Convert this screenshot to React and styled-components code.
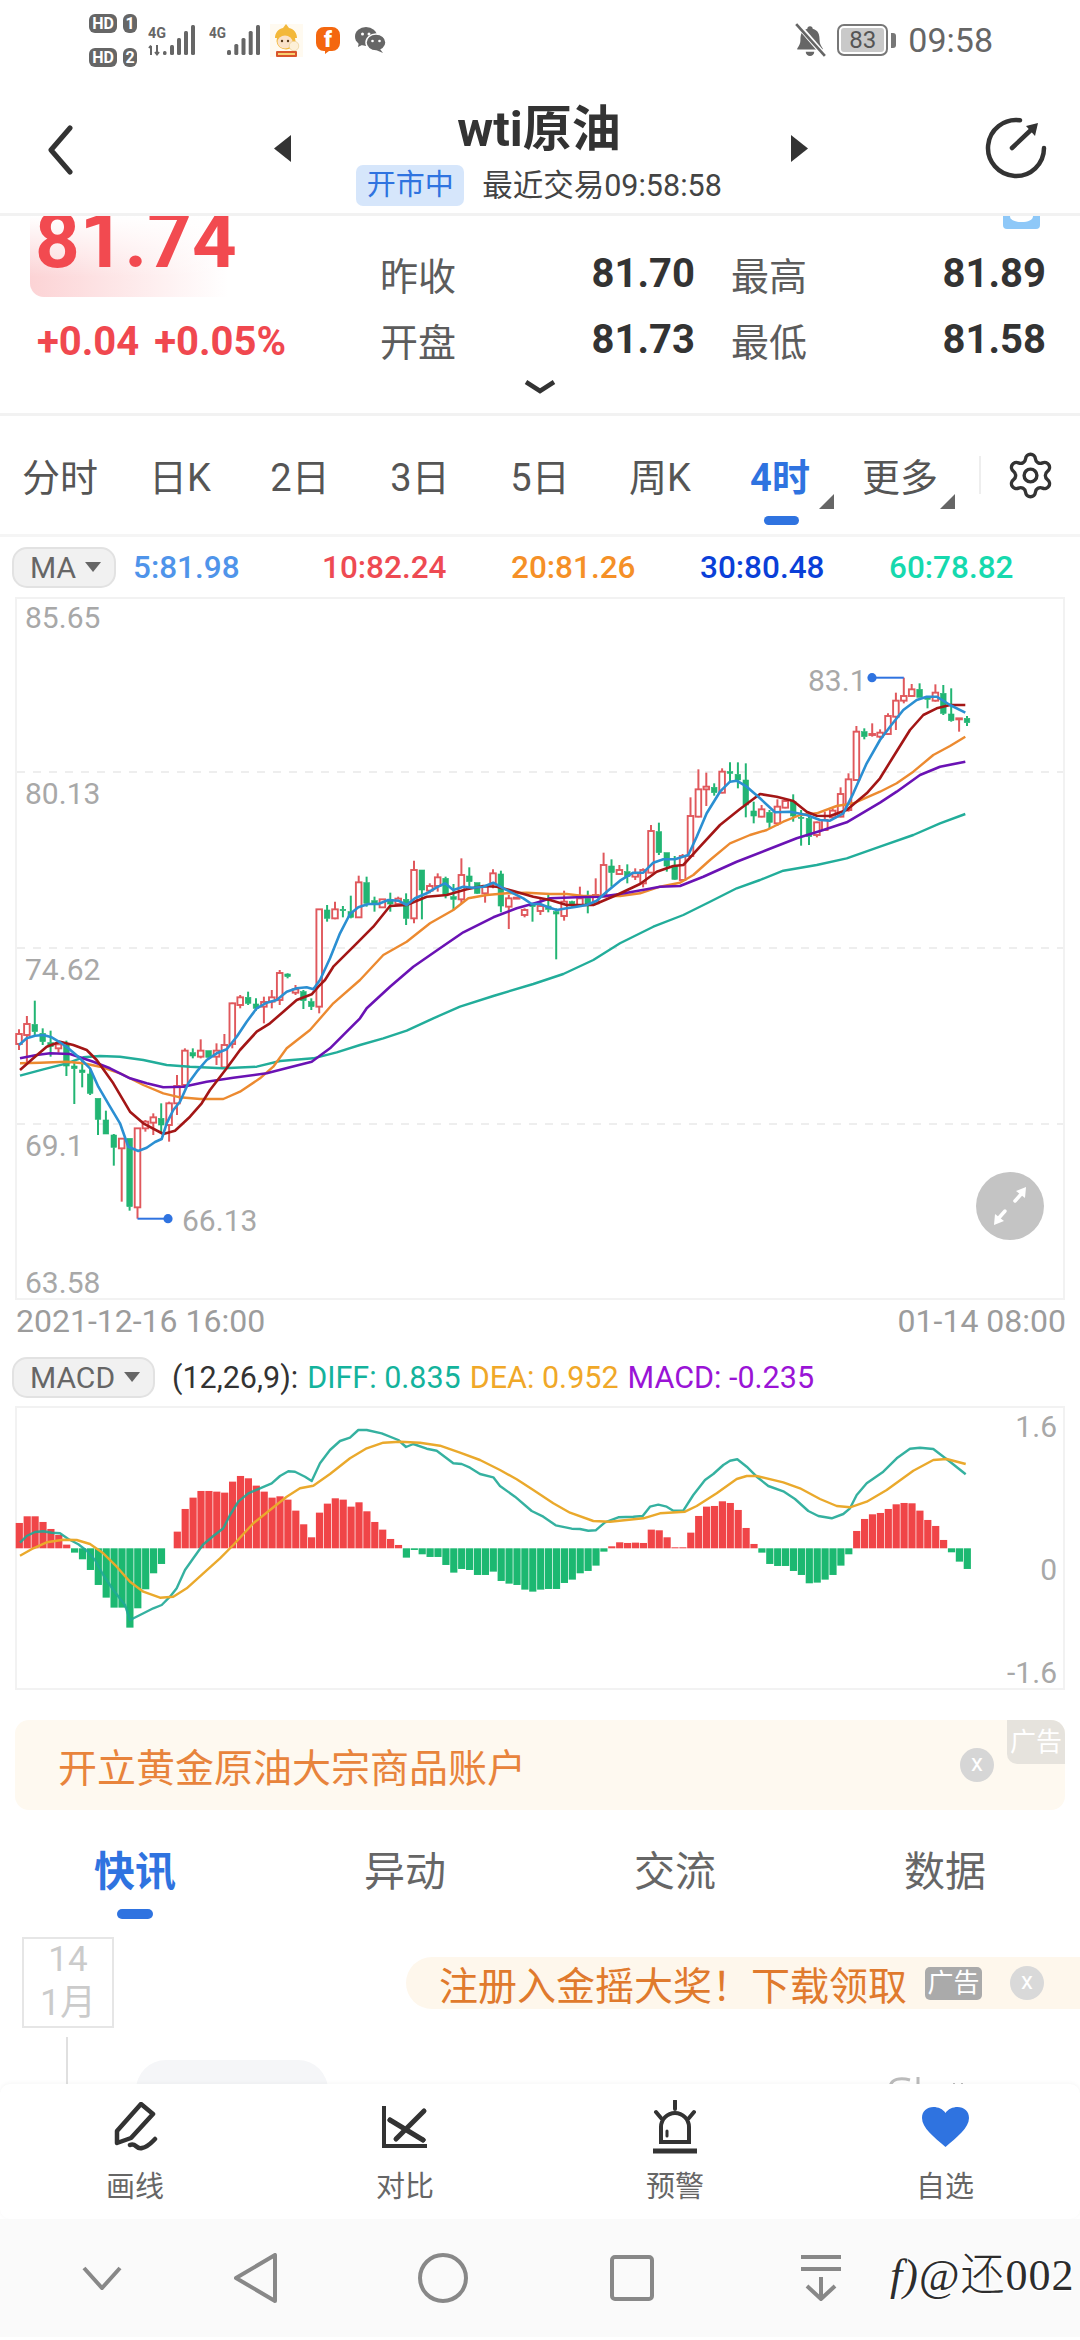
import React from 'react';
import styled, { createGlobalStyle } from 'styled-components';
import { Settings } from 'lucide-react';

const Global = createGlobalStyle`
  html, body { margin: 0; padding: 0; background: #fff; }
  #root { width: 1080px; height: 2340px; overflow: hidden; }
  * { box-sizing: border-box; }
`;

const BLUE = '#2f73e0';
const FONT = 'Roboto, "Noto Sans CJK SC", sans-serif';

const Page = styled.div`
  width: 1080px; height: 2340px; display: flex; flex-direction: column; background: #fff;
  font-family: ${FONT}; overflow: hidden; color: #333;
`;

/* ---------- status bar ---------- */
const StatusBar = styled.div`
  height: 80px; flex: none; display: flex; align-items: center; padding: 0 87px 0 89px;
`;
const SimStack = styled.div`display: flex; flex-direction: column; gap: 15px; width: 48px;`;
const SimRow = styled.div`display: flex; gap: 6px;`;
const SimChip = styled.span`
  height: 19px; width: ${p => p.$w}px; background: #666; color: #fff; border-radius: 6px;
  font: 700 16px/19px Roboto, sans-serif; text-align: center;
`;
const StatusIcon = styled.svg`display: block; flex: none; margin-left: ${p => p.$ml || 0}px;`;
const StatusRight = styled.div`margin-left: auto; display: flex; align-items: center;`;
const Battery = styled.div`
  width: 51px; height: 32px; margin-left: 10px; border: 2.5px solid #777; border-radius: 7px; padding: 2px;
  display: flex;
`;
const BatteryFill = styled.div`
  flex: 1; background: #c9c9c9; border-radius: 3px; color: #555; text-align: center;
  font: 400 24px/24px Roboto, sans-serif;
`;
const BatteryNub = styled.div`width: 5px; height: 15px; background: #777; border-radius: 0 3px 3px 0; margin-left: 3px;`;
const Clock = styled.div`font-size: 34px; color: #666; margin-left: 12px; line-height: 40px;`;

/* ---------- header ---------- */
const Header = styled.div`height: 133px; flex: none; display: flex; padding-left: 40px; align-items: flex-start; position: relative;`;
const NavSvg = styled.svg`display: block; flex: none; margin: ${p => p.$m};`;
const TitleBox = styled.div`width: 466px; flex: none; display: flex; flex-direction: column; align-items: center; margin-left: 15px;`;
const Title = styled.div`font-size: 49px; font-weight: 700; line-height: 60px; margin-top: 20px; color: #333;`;
const SubRow = styled.div`display: flex; align-items: center; margin-top: 5px;`;
const OpenBadge = styled.span`
  width: 108px; height: 41px; border-radius: 7px; background: #d6e6fb; color: ${BLUE}; font-size: 29px; line-height: 41px; text-align: center;
`;
const LastTrade = styled.span`font-size: 30.5px; color: #444; margin-left: 18px; line-height: 41px;`;
const Rule = styled.div`height: 3px; flex: none; background: #f2f2f2;`;

/* ---------- price ---------- */
const PriceArea = styled.div`height: 197px; flex: none; position: relative; overflow: hidden; display: flex;`;
const PriceCol = styled.div`width: 380px; flex: none; padding-left: 30px;`;
const PriceBox = styled.div`
  width: 215px; height: 81px; overflow: hidden; border-radius: 0 0 0 14px; padding-left: 5px;
  background: linear-gradient(to bottom, #fff, rgba(255,255,255,0) 75%), linear-gradient(to right, #fcd3d5, #fff 92%);
`;
const BigPrice = styled.div`font-size: 78px; font-weight: 700; line-height: 78px; margin-top: -14px; color: #f24a50;`;
const Change = styled.div`display: flex; gap: 15px; margin: 22px 0 0 7px; color: #f0484f; font-size: 40px; font-weight: 700; line-height: 46px; white-space: nowrap;`;
const StatGrid = styled.div`
  display: grid; grid-template-columns: 315px 315px; grid-auto-rows: 66px; column-gap: 36px; padding-top: 24.5px; height: 100%;
`;
const Stat = styled.div`display: flex; justify-content: space-between; align-items: center;`;
const StatLabel = styled.span`font-size: 38px; color: #5c5c5c;`;
const StatValue = styled.span`font-size: 40px; font-weight: 700; color: #333;`;
const MoreChevron = styled.svg`position: absolute; left: 524px; top: 164px;`;
const BlueTag = styled.svg`position: absolute; left: 1003px; top: 0;`;

/* ---------- period tabs ---------- */
const PeriodBar = styled.div`height: 121px; flex: none; display: flex; align-items: center; border-bottom: 3px solid #f5f5f5;`;
const Period = styled.div`
  width: 120px; height: 118px; flex: none; position: relative; text-align: center; line-height: 124px; font-size: 38px;
  color: ${p => p.$active ? BLUE : '#555'}; font-weight: ${p => p.$active ? 700 : 400};
`;
const CornerMark = styled.i`
  position: absolute; right: ${p => p.$r}px; top: 78px; width: 15px; height: 15px; background: #666;
  clip-path: polygon(100% 0, 100% 100%, 0 100%);
`;
const PeriodBarMark = styled.i`
  position: absolute; left: 44px; top: 100px; width: 35px; height: 9px; border-radius: 5px; background: ${BLUE};
`;
const VRule = styled.div`width: 2px; height: 38px; background: #eee; margin: 0 0 0 19px;`;
const GearWrap = styled.div`margin-left: 24px; display: flex; color: #333;`;

/* ---------- indicator rows ---------- */
const MaRow = styled.div`height: 60px; flex: none; display: flex; align-items: center; padding-left: 12px;`;
const Pill = styled.div`
  height: 41px; width: ${p => p.$w}px; flex: none; border-radius: 15px; background: #f1f1f1; border: 2px solid #e2e2e2;
  display: flex; align-items: center; padding-left: 16px; gap: 9px; font-size: 30px; color: #666; line-height: 37px;
`;
const PillArrow = styled.i`
  width: 16px; height: 10px; background: #666; clip-path: polygon(0 0, 100% 0, 50% 100%);
`;
const MaValues = styled.div`display: grid; grid-template-columns: repeat(5, 189px); margin-left: 17px;`;
const MaValue = styled.span`font-size: 31.5px; font-weight: 500; color: ${p => p.$c}; line-height: 40px; margin-top: 1px;`;
const ChartBox = styled.div`margin: 0 15px; height: ${p => p.$h}px; flex: none; border: 2px solid #f2f2f2;`;
const ChartSvg = styled.svg`display: block; overflow: visible;`;
const AxisDates = styled.div`
  height: 45px; flex: none; display: flex; justify-content: space-between; padding: 0 14px 3px 16px; align-items: center;
  font-size: 32px; color: #9c9c9c; line-height: 42px;
`;
const MacdRow = styled.div`height: 61px; flex: none; display: flex; align-items: center; padding: 3px 0 0 12px; white-space: nowrap;`;
const MacdParams = styled.div`display: flex; gap: 9px; margin: 2px 0 0 17px; font-size: 30.5px; line-height: 40px;`;
const MacdParam = styled.span`color: ${p => p.$c};`;

/* ---------- banner ---------- */
const Banner = styled.div`
  margin: 30px 15px 0; height: 90px; flex: none; background: #fef9f0; border-radius: 14px; position: relative;
  display: flex; align-items: center; padding-left: 43px;
`;
const BannerText = styled.span`font-size: 39px; color: #e8843c; white-space: nowrap;`;
const CloseDot = styled.span`
  width: 34px; height: 34px; border-radius: 50%; background: ${p => p.$c}; color: #fff; flex: none;
  margin-left: ${p => p.$ml}px; text-align: center; font: 400 24px/31px Roboto, sans-serif;
`;
const CornerTag = styled.span`
  position: absolute; top: 0; right: 0; width: 58px; height: 44px; background: #e6e3dd; color: #fff;
  border-radius: 0 14px 0 10px; font-size: 26px; line-height: 44px; text-align: center;
`;

/* ---------- news tabs ---------- */
const NewsTabs = styled.div`height: 127px; flex: none; display: grid; grid-template-columns: repeat(4, 270px);`;
const NewsTab = styled.div`
  position: relative; text-align: center; font-size: 41px; line-height: 124px;
  color: ${p => p.$active ? BLUE : '#666'}; font-weight: ${p => p.$active ? 700 : 400};
`;
const NewsMark = styled.i`
  position: absolute; left: 117px; top: 99px; width: 36px; height: 10px; border-radius: 5px; background: ${BLUE};
`;

/* ---------- feed ---------- */
const Feed = styled.div`height: 147px; flex: none; display: flex; overflow: hidden;`;
const TimeCol = styled.div`width: 136px; flex: none; padding-left: 22px;`;
const DateBox = styled.div`
  width: 92px; height: 91px; border: 2px solid #e6e6e6; color: #cbcbcb; text-align: center;
  display: flex; flex-direction: column; align-items: center; justify-content: center;
`;
const DateDay = styled.span`font-size: 35px; line-height: 42px; margin-top: -1px;`;
const DateMonth = styled.span`font-size: 36px; line-height: 44px;`;
const TimeLine = styled.div`width: 2px; height: 60px; background: #e0e0e0; margin: 9px 0 0 44px;`;
const FeedMain = styled.div`flex: 1; display: flex; flex-direction: column; padding-top: 20px;`;
const PromoBar = styled.div`
  height: 52px; width: 674px; flex: none; margin-left: 270px; background: #fef7ec; border-radius: 26px 0 0 26px;
  display: flex; align-items: center; padding-left: 33px; white-space: nowrap;
`;
const PromoText = styled.span`font-size: 39px; color: #e07a2d;`;
const PromoTag = styled.span`
  width: 57px; height: 33px; margin-left: 18px; border-radius: 5px; background: #aaa; color: #fff; font-size: 26px; line-height: 33px; text-align: center; flex: none;
`;
const FeedBelow = styled.div`display: flex; justify-content: space-between; margin-top: 51px; padding-right: 72px;`;
const FeedCard = styled.div`width: 192px; height: 40px; border-radius: 30px 30px 0 0; background: #f5f6f8;`;
const FeedIcon = styled.svg`display: block; margin-top: 15px;`;

/* ---------- toolbar ---------- */
const Toolbar = styled.div`
  height: 135px; flex: none; display: grid; grid-template-columns: repeat(4, 270px); background: #fff; border-radius: 10px;
  position: relative; box-shadow: 0 -1px 4px rgba(0,0,0,.04);
`;
const ToolItem = styled.div`display: flex; flex-direction: column; align-items: center; padding-top: 14px;`;
const ToolIconBox = styled.div`height: 58px; display: flex; align-items: center; justify-content: center;`;
const ToolLabel = styled.span`font-size: 29px; line-height: 36px; margin-top: 13px; color: #666;`;

/* ---------- nav bar ---------- */
const NavBar = styled.div`
  height: 118px; flex: none; background: #fafafa; display: grid; grid-template-columns: 204px 104px 270px 108px 270px; align-items: center; position: relative;
`;
const NavCell = styled.div`display: flex; justify-content: center;`;
const Watermark = styled.div`
  position: absolute; left: 890px; top: 33px; font: 300 44px/48px "Liberation Serif", "Noto Sans CJK SC", serif; color: #2d2d2d; white-space: nowrap; letter-spacing: 1px;
  text-shadow: 1px 1px 0 #fff, -1px -1px 0 #fff, 1px -1px 0 #fff, -1px 1px 0 #fff, 0 0 4px #fff;
`;
const WatermarkLead = styled.i`font-style: italic;`;

/* ---------- chart data ---------- */
const M = (ox, oy, pts) => pts.map(([x, y]) => [ox + x / 3, oy + y / 3]);
const joinSegs = (...segs) => {
  const out = [];
  segs.forEach(seg => seg.forEach(p => { if (!out.length || p[0] > out[out.length - 1][0] + 0.5) out.push(p); }));
  return out.map(p => `${p[0].toFixed(1)},${p[1].toFixed(1)}`).join(' ');
};
const ma = (a, b, c, d) => joinSegs(M(0, 980, a), M(300, 830, b), M(560, 730, c), M(780, 640, d));

const MA5 = ma(
  [[57,195],[80,175],[105,167],[130,165],[155,172],[180,187],[205,205],[240,235],[270,265],[295,320],[330,380],[360,430],[385,500],[415,513],[440,503],[465,486],[485,477],[500,430],[520,390],[540,365],[565,310],[590,275],[620,240],[650,220],[680,208],[710,170],[740,125],[770,85],[800,68],[830,60],[860,35],[890,25],[920,22],[940,28],[960,0]],
  [[0,472],[33,478],[60,430],[90,385],[120,310],[150,252],[175,232],[205,222],[235,222],[265,210],[295,212],[320,225],[345,205],[380,190],[410,172],[435,160],[460,180],[490,170],[520,173],[550,170],[580,158],[610,175],[640,190],[670,205],[695,222],[720,222],[745,232],[770,240],[800,235],[830,230],[860,225],[890,212],[920,185],[960,152]],
  [[220,428],[250,428],[280,398],[310,388],[345,388],[385,375],[410,320],[440,250],[480,185],[510,155],[530,152],[560,170],[600,205],[645,247],[690,245],[740,255],[780,270],[810,272],[850,250],[880,190],[920,100],[960,30]],
  [[330,260],[370,210],[410,180],[440,170],[470,170],[510,195],[556,218]]
);
const MA10 = ma(
  [[60,270],[100,235],[140,200],[180,185],[220,195],[260,210],[290,240],[340,310],[390,395],[430,430],[490,462],[525,452],[570,410],[605,370],[630,330],[680,265],[720,210],[770,155],[810,130],[850,95],[890,60],[935,43],[955,20],[975,0]],
  [[33,495],[100,410],[170,340],[220,290],[270,228],[320,225],[380,200],[440,195],[500,178],[550,168],[590,170],[640,183],[700,200],[750,210],[800,225],[880,225],[950,195]],
  [[240,462],[290,425],[340,408],[370,405],[420,350],[480,285],[540,237],[600,192],[650,200],[700,213],[740,245],[770,257],[810,258],[860,240],[920,190],[960,145]],
  [[340,350],[390,270],[430,225],[470,205],[510,195],[556,195]]
);
const MA20 = ma(
  [[60,250],[120,248],[200,245],[250,250],[300,260],[360,280],[430,315],[490,340],[540,352],[600,357],[670,357],[720,335],[780,295],[820,260],[860,205],[930,150],[1000,70],[1080,0]],
  [[250,375],[320,335],[390,280],[460,240],[505,205],[560,195],[620,190],[680,188],[750,192],[800,192],[850,198],[960,198]],
  [[240,490],[300,470],[360,458],[400,435],[450,390],[510,340],[570,315],[620,300],[670,275],[720,255],[770,250],[830,228],[880,220],[960,185]],
  [[350,430],[400,395],[460,345],[510,318],[556,290]]
);
const MA30 = ma(
  [[60,235],[110,225],[150,220],[210,222],[280,245],[330,265],[390,295],[440,310],[490,322],[550,320],[620,305],[700,293],[800,280],[870,262],[935,245],[990,205],[1040,155],[1080,115]],
  [[200,535],[270,470],[340,410],[420,355],[490,307],[580,262],[650,235],[720,215],[750,205],[830,202],[900,200],[960,192]],
  [[260,478],[300,470],[360,468],[430,440],[530,395],[620,360],[710,325],[790,300],[860,277],[960,218]],
  [[350,455],[420,405],[480,380],[556,365]]
);
const MA60 = ma(
  [[60,287],[130,268],[200,250],[250,232],[300,228],[360,230],[430,240],[500,255],[570,260],[670,265],[770,260],[840,243],[940,235],[1010,217],[1080,195]],
  [[250,625],[320,602],[400,565],[480,530],[580,498],[700,462],[790,432],[880,390],[960,340]],
  [[280,590],[370,555],[450,515],[530,475],[600,450],[670,422],[770,405],[860,385],[960,350]],
  [[400,585],[480,550],[556,522]]
);

const rawCandles = [
  [980, [[1,148,162,192,210],[1,108,132,165,250],[0,62,133,155,165],[0,145,160,185,195],[0,152,188,200,230],[1,180,193,205,218],[0,182,195,258,288],[0,245,258,266,372],[0,240,270,278,322],[0,265,282,340,345],[0,355,355,418,465],[0,392,420,462,462],[0,462,465,502,557],[1,475,476,505,665],[0,475,475,680,692],[1,445,445,682,716],[1,420,425,445,455],[1,400,412,428,465],[0,370,415,435,462],[1,365,370,435,485],[1,285,318,370,405],[1,205,212,315,325],[0,205,218,228,235],[1,178,212,230,235],[0,212,212,232,238],[1,190,212,230,255],[1,162,195,262,265],[1,68,70,192,205],[1,45,52,75,85],[0,35,52,70,75],[0,55,72,85,92],[1,50,66,80,130],[1,30,52,65,85],[1,-30,-21,60,75],[0,-20,-18,-10,-5],[1,15,28,38,45]]],
  [830, [[0,480,485,512,537],[0,505,515,530,540],[1,237,238,530,550],[0,225,240,265,275],[1,215,238,265,268],[0,228,238,242,262],[0,197,245,262,265],[1,137,157,262,262],[0,140,158,220,230],[0,200,212,220,245],[1,208,208,232,232],[0,188,208,222,245],[1,200,206,222,225],[0,190,208,265,285],[1,92,120,265,280],[0,120,120,180,268],[1,160,168,182,190],[1,130,142,168,185],[0,140,145,192,205],[0,162,200,208,240],[1,85,135,208,220],[0,112,138,155,175],[0,158,158,190,192],[1,165,170,190,218],[1,118,130,160,175],[0,122,132,228,247],[1,195,205,230,297],[1,203,203,204,204],[1,235,240,255,262],[0,222,225,230,275],[1,205,228,243,255],[0,195,228,238,247],[0,235,245,252,388]]],
  [730, [[1,482,515,558,572],[0,512,515,525,530],[1,470,505,525,530],[0,482,505,525,550],[1,445,495,520,525],[1,368,405,500,500],[0,388,408,428,470],[1,405,420,432,435],[0,403,425,440,460],[1,415,430,440,450],[1,415,420,460,472],[1,285,303,428,430],[0,278,305,368,375],[0,368,368,408,425],[0,378,408,448,450],[1,372,378,450,452],[1,202,258,378,380],[1,118,178,260,262],[1,128,170,178,228],[0,160,172,188,197],[1,115,125,188,190],[0,97,125,130,158],[0,97,133,150,175],[0,100,150,225,262],[0,215,243,258,280],[1,225,238,260,262],[0,240,247,277,295],[1,208,230,280,288],[1,205,213,233,235],[0,193,215,258,275],[0,240,262,265,347],[0,255,265,320,345],[1,275,277,315,322],[1,245,270,300,300],[1,235,242,262,265],[1,172,192,260,262],[1,130,148,240,245]]],
  [640, [[1,258,275,420,420],[0,265,275,290,298],[1,250,282,285,290],[1,268,278,290,295],[1,220,228,282,285],[1,158,182,230,270],[1,113,168,182,190],[1,132,148,168,170],[0,130,148,172,172],[0,172,172,178,205],[1,133,158,182,185],[0,135,160,220,225],[0,145,222,242,245],[1,235,235,238,275],[0,228,235,248,258]]],
];
const candles = [];
rawCandles.forEach(([oy, rows]) => rows.forEach(([up, h, t, b, l]) => {
  candles.push({ x: 19 + 7.9 * candles.length, up, h: oy + h / 3, t: oy + t / 3, b: oy + b / 3, l: oy + l / 3 });
}));

const macdBars = [76,96,96,79,58,40,11,-13,-33,-65,-110,-148,-178,-178,-238,-180,-123,-75,-47,0,50,118,152,172,172,170,167,200,217,210,188,170,152,156,146,113,72,33,107,134,150,146,125,138,111,79,56,28,10,-28,-5,-18,-26,-26,-50,-73,-62,-65,-80,-80,-70,-98,
  -106,-110,-124,-130,-124,-122,-122,-104,-94,-75,-68,-52,-10,6,18,16,17,16,56,54,33,3,3,47,97,125,127,141,136,115,61,13,-13,-47,-53,-53,-68,-80,-105,-103,-94,-80,-52,-18,52,88,102,106,118,132,136,135,113,85,67,25,-12,-40,-62];

const macdLine = (a, b) => joinSegs(M(0, 1400, a), M(500, 1400, b));
const DIFF = macdLine(
  [[60,428],[80,408],[105,396],[130,394],[155,398],[180,400],[205,417],[235,433],[260,452],[285,480],[310,525],[340,570],[375,615],[390,660],[420,645],[460,625],[485,615],[510,590],[530,565],[555,510],[580,475],[610,433],[640,408],[670,385],[690,345],[715,305],[745,280],[780,265],[815,250],[840,228],[865,214],[885,215],[915,230],[935,243],[960,190],[990,150],[1020,123],[1050,113],[1075,90],[1100,90],[1145,100],[1195,120],[1218,141],[1240,132],[1280,146],[1310,152],[1360,190],[1385,192],[1410,203],[1440,222],[1480,232],[1500,258]],
  [[45,290],[95,333],[130,350],[167,376],[215,386],[240,387],[265,392],[287,391],[315,367],[355,352],[400,350],[428,348],[450,320],[475,314],[500,320],[520,332],[550,332],[580,285],[615,240],[640,222],[670,195],[690,182],[712,178],[740,200],[770,230],[805,258],[850,274],[885,297],[925,333],[955,348],[995,355],[1030,342],[1050,325],[1070,285],[1100,250],[1150,215],[1190,175],[1230,146],[1260,143],[1300,147],[1350,185],[1397,223]]
);
const DEA = macdLine(
  [[60,467],[100,445],[140,427],[190,419],[230,420],[270,432],[310,460],[350,500],[390,545],[430,575],[480,593],[520,590],[560,565],[610,520],[660,475],[700,435],[760,370],[810,330],[860,290],[900,265],[940,257],[990,222],[1050,175],[1100,145],[1150,128],[1200,125],[1260,128],[1320,137],[1380,158],[1440,180],[1500,210]],
  [[50,238],[100,270],[160,310],[210,338],[280,363],[330,365],[430,355],[480,340],[555,335],[590,318],[650,280],[710,237],[740,228],[770,228],[850,247],[900,265],[960,297],[1010,318],[1050,322],[1100,305],[1160,270],[1240,212],[1300,180],[1340,177],[1397,192]]
);

const RED = '#e0585c', GREEN = '#22b573';
const axisText = { fontFamily: 'Roboto, sans-serif', fontSize: 30, fill: '#a8a8a8' };

const KChart = () => (
  <ChartSvg width="1046" height="699" viewBox="17 599 1046 699">
    {[772, 948, 1124].map(y => <line key={y} x1="17" x2="1063" y1={y} y2={y} stroke="#eeeeee" strokeWidth="2" strokeDasharray="8 8" />)}
    {candles.map((c, i) => {
      const col = c.up ? RED : GREEN;
      return (
        <g key={i}>
          <line x1={c.x} x2={c.x} y1={c.h} y2={c.t} stroke={col} strokeWidth="2" />
          <line x1={c.x} x2={c.x} y1={c.b} y2={c.l} stroke={col} strokeWidth="2" />
          <rect x={c.x - 2.8} y={c.t} width="5.6" height={Math.max(c.b - c.t, 1)} fill={c.up ? '#fff' : col} stroke={col} strokeWidth={c.up ? 1.9 : 0.6} />
        </g>
      );
    })}
    <polyline points={MA60} fill="none" stroke="#22ad9a" strokeWidth="2.4" strokeLinejoin="round" />
    <polyline points={MA20} fill="none" stroke="#ec8a30" strokeWidth="2.4" strokeLinejoin="round" />
    <polyline points={MA30} fill="none" stroke="#6a12b4" strokeWidth="2.6" strokeLinejoin="round" />
    <polyline points={MA10} fill="none" stroke="#a31616" strokeWidth="2.6" strokeLinejoin="round" />
    <polyline points={MA5} fill="none" stroke="#2b8fd2" strokeWidth="2.6" strokeLinejoin="round" />
    <polyline points="903.8,677.7 872,677.7" fill="none" stroke={BLUE} strokeWidth="2" />
    <circle cx="872" cy="677.7" r="4.6" fill={BLUE} />
    <polyline points="137.5,1218.7 168,1218.7" fill="none" stroke={BLUE} strokeWidth="2" />
    <circle cx="168" cy="1218.7" r="4.6" fill={BLUE} />
    <text x="808" y="691" {...axisText}>83.1</text>
    <text x="182" y="1231" {...axisText}>66.13</text>
    <text x="25" y="628" {...axisText}>85.65</text>
    <text x="25" y="804" {...axisText}>80.13</text>
    <text x="25" y="980" {...axisText}>74.62</text>
    <text x="25" y="1156" {...axisText}>69.1</text>
    <text x="25" y="1293" {...axisText}>63.58</text>
    <circle cx="1010" cy="1206" r="34" fill="#c4c4c4" />
    <g stroke="#fff" strokeWidth="3.5" fill="none" strokeLinecap="round">
      <line x1="1015" y1="1201" x2="1023" y2="1192" />
      <line x1="1005" y1="1211" x2="997" y2="1220" />
    </g>
    <polygon points="1026,1187 1025,1198 1016,1191" fill="#fff" />
    <polygon points="994,1225 995,1214 1004,1221" fill="#fff" />
  </ChartSvg>
);

const MacdChart = () => (
  <ChartSvg width="1046" height="280" viewBox="17 1408 1046 280">
    {macdBars.map((v, i) => {
      const h = Math.abs(v) / 3;
      if (!h) return null;
      return <rect key={i} x={15.7 + 7.9 * i} y={v > 0 ? 1548.3 - h : 1548.3} width="7.2" height={h} fill={v > 0 ? '#f04548' : '#1cb871'} />;
    })}
    <polyline points={DIFF} fill="none" stroke="#1fa896" strokeWidth="2.4" strokeOpacity=".9" strokeLinejoin="round" />
    <polyline points={DEA} fill="none" stroke="#eaa92c" strokeWidth="2.4" strokeLinejoin="round" />
    <text x="1057" y="1437" textAnchor="end" {...axisText}>1.6</text>
    <text x="1057" y="1580" textAnchor="end" {...axisText}>0</text>
    <text x="1057" y="1683" textAnchor="end" {...axisText}>-1.6</text>
  </ChartSvg>
);

const SignalA = () => (
  <StatusIcon $ml={11} width="50" height="40" viewBox="0 0 50 40">
    <text x="0" y="18" fontFamily="Roboto, sans-serif" fontSize="15" fontWeight="700" fill="#666" textLength="18" lengthAdjust="spacingAndGlyphs">4G</text>
    <path d="M3 35V26M1 28l2-2.500M9 25v9M7 32l2 2.500 2-2.500" stroke="#666" strokeWidth="2" fill="none" />
    <rect x="15" y="31" width="3.5" height="4" rx="1.5" fill="#666" />
    {[[22, 10], [29, 17], [36, 24], [43, 30]].map(([x, h]) => <rect key={x} x={x} y={35 - h} width="4" height={h} rx="1.5" fill="#666" />)}
  </StatusIcon>
);
const SignalB = () => (
  <StatusIcon $ml={11} width="51" height="40" viewBox="0 0 51 40">
    <text x="0" y="18" fontFamily="Roboto, sans-serif" fontSize="15" fontWeight="700" fill="#666" textLength="17" lengthAdjust="spacingAndGlyphs">4G</text>
    {[[18, 5], [25.3, 11], [32.5, 17], [39.7, 24], [47, 30]].map(([x, h]) => <rect key={x} x={x} y={35 - h} width="4" height={h} rx="1.5" fill="#666" />)}
  </StatusIcon>
);
const Monkey = () => (
  <StatusIcon $ml={10} width="33" height="33" viewBox="0 0 33 33">
    <rect width="33" height="33" fill="#fffaf0" />
    <path d="M16 0l3 4c5 1 8 5 8 10H5C5 9 8 5 13 4z" fill="#f3b83a" />
    <ellipse cx="16" cy="17" rx="9.5" ry="8.5" fill="#f3b83a" />
    <ellipse cx="15" cy="18" rx="7.5" ry="6.5" fill="#fbe2c8" />
    <circle cx="12" cy="17" r="1.2" fill="#5a3a1a" />
    <circle cx="18" cy="17" r="1.2" fill="#5a3a1a" />
    <circle cx="24" cy="22" r="4.8" fill="#fdf0d8" stroke="#e8c98a" strokeWidth=".6" />
    <rect x="6" y="27" width="21" height="6" rx="1" fill="#d9542a" />
    <rect x="8" y="29" width="17" height="2" fill="#f8d070" />
  </StatusIcon>
);
const OrangeF = () => (
  <StatusIcon $ml={13} width="24" height="27" viewBox="0 0 24 27">
    <path d="M8 0h8a8 8 0 0 1 8 8v8a8 8 0 0 1-8 8h-3l-4 3v-3H8a8 8 0 0 1-8-8V8a8 8 0 0 1 8-8z" fill="#f4670f" />
    <text x="12" y="20" textAnchor="middle" fontFamily="Roboto, sans-serif" fontWeight="900" fontSize="22" fill="#fff">f</text>
  </StatusIcon>
);
const WeChat = () => (
  <StatusIcon $ml={15} width="31" height="26" viewBox="0 0 31 26">
    <ellipse cx="11" cy="9.5" rx="11" ry="9.5" fill="#666" />
    <path d="M4 15l-1 5 6-3z" fill="#666" />
    <ellipse cx="21" cy="15.5" rx="10" ry="8.5" fill="#666" stroke="#fff" strokeWidth="1.5" />
    <path d="M25 22l3 4-7-3z" fill="#666" />
    <circle cx="7.5" cy="7" r="1.5" fill="#fff" /><circle cx="14" cy="7" r="1.5" fill="#fff" />
    <circle cx="17.5" cy="14" r="1.3" fill="#fff" /><circle cx="24.5" cy="14" r="1.3" fill="#fff" />
  </StatusIcon>
);
const MutedBell = () => (
  <StatusIcon width="34" height="34" viewBox="0 0 32 32">
    <path d="M16 3a2.500 2.500 0 0 1 2.500 2.500C24 7 25 11 25 16c0 3 1 5 3 8v1H4v-1c2-3 3-5 3-8 0-5 1-9 6.500-10.500A2.500 2.500 0 0 1 16 3z" fill="#666" />
    <path d="M12 27h8a4 4 0 0 1-8 0z" fill="#666" />
    <path d="M4 1l26 30" stroke="#fff" strokeWidth="5" />
    <path d="M3 1l27 30" stroke="#666" strokeWidth="2.500" />
  </StatusIcon>
);

const PenIcon = () => (
  <svg width="46" height="50" viewBox="0 0 46 50" fill="none" stroke="#333" strokeWidth="4.5" strokeLinejoin="round" strokeLinecap="round">
    <path d="M29 2l12 10-22 24-14 5V29z" />
    <path d="M18 43c6-3 6 5 12 3 6-1 9-5 13-9" />
  </svg>
);
const CompareIcon = () => (
  <svg width="46" height="44" viewBox="0 0 46 44" fill="none" stroke="#333" strokeLinecap="round">
    <path d="M2 1v40h43" strokeWidth="4" strokeLinecap="butt" />
    <path d="M8 15l33 20M14 34L42 6" strokeWidth="5" />
    <circle cx="8" cy="15" r="2" fill="#333" />
    <circle cx="41" cy="35" r="2" fill="#333" />
  </svg>
);
const AlarmIcon = () => (
  <svg width="44" height="55" viewBox="0 0 44 55" fill="none" stroke="#333" strokeWidth="4" strokeLinecap="round">
    <path d="M8 42V27a14 14 0 0 1 28 0v15z" />
    <path d="M14 36v-5" strokeWidth="3" />
    <path d="M0 51h44" strokeWidth="5" strokeLinecap="butt" />
    <path d="M22 1v8M3 12l5 6M41 12l-5 6" />
  </svg>
);
const HeartIcon = () => (
  <svg width="47" height="40" viewBox="0 0 47 40">
    <path d="M23.500 40C12 30 0 21 0 11 0 4 5 0 11.500 0 16 0 21 2 23.500 6 26 2 31 0 35.500 0 42 0 47 4 47 11 47 21 35 30 23.500 40z" fill={BLUE} />
  </svg>
);

const PERIODS = ['分时', '日K', '2日', '3日', '5日', '周K', '4时', '更多'];
const TOOLS = [[<PenIcon key="p" />, '画线'], [<CompareIcon key="c" />, '对比'], [<AlarmIcon key="a" />, '预警'], [<HeartIcon key="h" />, '自选']];
const MAS = [['5:81.98', '#4f94ea'], ['10:82.24', '#ee4a52'], ['20:81.26', '#f59027'], ['30:80.48', '#0a3fd8'], ['60:78.82', '#16d9ae']];
const STATS = [['昨收', '81.70'], ['最高', '81.89'], ['开盘', '81.73'], ['最低', '81.58']];
const NEWS = ['快讯', '异动', '交流', '数据'];

export default function App() {
  return (
    <Page>
      <Global />
      <StatusBar>
        <SimStack>
          <SimRow><SimChip $w={28}>HD</SimChip><SimChip $w={14}>1</SimChip></SimRow>
          <SimRow><SimChip $w={28}>HD</SimChip><SimChip $w={14}>2</SimChip></SimRow>
        </SimStack>
        <SignalA /><SignalB /><Monkey /><OrangeF /><WeChat />
        <StatusRight>
          <MutedBell />
          <Battery><BatteryFill>83</BatteryFill></Battery>
          <BatteryNub />
          <Clock>09:58</Clock>
        </StatusRight>
      </StatusBar>

      <Header>
        <NavSvg $m="45px 0 0 7px" width="26" height="50" viewBox="0 0 26 50" fill="none" stroke="#333" strokeWidth="5" strokeLinecap="round" strokeLinejoin="round">
          <path d="M23 3L4 25l19 22" />
        </NavSvg>
        <NavSvg $m="55px 0 0 201px" width="17" height="27" viewBox="0 0 17 27"><path d="M17 0v27L0 13.500z" fill="#333" /></NavSvg>
        <TitleBox>
          <Title>wti原油</Title>
          <SubRow>
            <OpenBadge>开市中</OpenBadge>
            <LastTrade>最近交易09:58:58</LastTrade>
          </SubRow>
        </TitleBox>
        <NavSvg $m="55px 0 0 19px" width="17" height="27" viewBox="0 0 17 27"><path d="M0 0v27l17-13.500z" fill="#333" /></NavSvg>
        <NavSvg $m="36px 0 0 176px" width="64" height="64" viewBox="0 0 64 64" fill="none" stroke="#333" strokeWidth="4.500" strokeLinecap="round">
          <path d="M36 4.300A28 28 0 1 0 60 32" />
          <path d="M28 32L48 13" />
          <path d="M54 7L42 10l9 10z" fill="#333" stroke="none" />
        </NavSvg>
      </Header>
      <Rule />

      <PriceArea>
        <PriceCol>
          <PriceBox><BigPrice>81.74</BigPrice></PriceBox>
          <Change><span>+0.04</span><span>+0.05%</span></Change>
        </PriceCol>
        <StatGrid>
          {STATS.map(([k, v]) => <Stat key={k}><StatLabel>{k}</StatLabel><StatValue>{v}</StatValue></Stat>)}
        </StatGrid>
        <BlueTag width="37" height="13" viewBox="0 0 37 13">
          <path d="M0 0h37v9a4 4 0 0 1-4 4H4a4 4 0 0 1-4-4z" fill="#8ec8f8" />
          <path d="M7 0h23c0 4-5 6-11.500 6S7 4 7 0z" fill="#fff" />
        </BlueTag>
        <MoreChevron width="32" height="14" viewBox="0 0 32 14" fill="none" stroke="#333" strokeWidth="4.500">
          <path d="M2 2l14 9 14-9" />
        </MoreChevron>
      </PriceArea>
      <Rule />

      <PeriodBar>
        {PERIODS.map((p, i) => (
          <Period key={p} $active={p === '4时'}>
            {p}
            {i >= 6 && <CornerMark $r={i === 6 ? 6 : 5} />}
            {p === '4时' && <PeriodBarMark />}
          </Period>
        ))}
        <VRule />
        <GearWrap><Settings size={51} strokeWidth={1.6} /></GearWrap>
      </PeriodBar>

      <MaRow>
        <Pill $w={104}>MA<PillArrow /></Pill>
        <MaValues>{MAS.map(([t, c]) => <MaValue key={t} $c={c}>{t}</MaValue>)}</MaValues>
      </MaRow>
      <ChartBox $h={703}><KChart /></ChartBox>
      <AxisDates><span>2021-12-16 16:00</span><span>01-14 08:00</span></AxisDates>

      <MacdRow>
        <Pill $w={143}>MACD<PillArrow /></Pill>
        <MacdParams>
          <MacdParam $c="#333">(12,26,9):</MacdParam>
          <MacdParam $c="#14b39c">DIFF: 0.835</MacdParam>
          <MacdParam $c="#f0a828">DEA: 0.952</MacdParam>
          <MacdParam $c="#9a14d6">MACD: -0.235</MacdParam>
        </MacdParams>
      </MacdRow>
      <ChartBox $h={284}><MacdChart /></ChartBox>

      <Banner>
        <BannerText>开立黄金原油大宗商品账户</BannerText>
        <CloseDot $c="#d6d6d6" $ml={434}>x</CloseDot>
        <CornerTag>广告</CornerTag>
      </Banner>

      <NewsTabs>
        {NEWS.map((n, i) => <NewsTab key={n} $active={i === 0}>{n}{i === 0 && <NewsMark />}</NewsTab>)}
      </NewsTabs>

      <Feed>
        <TimeCol>
          <DateBox><DateDay>14</DateDay><DateMonth>1月</DateMonth></DateBox>
          <TimeLine />
        </TimeCol>
        <FeedMain>
          <PromoBar>
            <PromoText>注册入金摇大奖！下载领取</PromoText>
            <PromoTag>广告</PromoTag>
            <CloseDot $c="#d9d9d9" $ml={28}>x</CloseDot>
          </PromoBar>
          <FeedBelow>
            <FeedCard />
            <FeedIcon width="120" height="12" viewBox="0 0 120 12" fill="none" stroke="#bbb" strokeWidth="3">
              <path d="M2 12C3 4 12 2 22 5M30 2v10" />
              <path d="M66 8v4M74 8v4M113 9v3" strokeWidth="2" />
            </FeedIcon>
          </FeedBelow>
        </FeedMain>
      </Feed>

      <Toolbar>
        {TOOLS.map(([icon, label]) => (
          <ToolItem key={label}>
            <ToolIconBox>{icon}</ToolIconBox>
            <ToolLabel>{label}</ToolLabel>
          </ToolItem>
        ))}
      </Toolbar>

      <NavBar>
        <NavCell>
          <svg width="40" height="24" viewBox="0 0 40 24" fill="none" stroke="#888" strokeWidth="4"><path d="M2 2l18 20L38 2" /></svg>
        </NavCell>
        <NavCell>
          <svg width="44" height="50" viewBox="0 0 44 50" fill="none" stroke="#888" strokeWidth="4" strokeLinejoin="round"><path d="M41 2v46L2 25z" /></svg>
        </NavCell>
        <NavCell>
          <svg width="50" height="50" viewBox="0 0 50 50" fill="none" stroke="#888" strokeWidth="4"><circle cx="25" cy="25" r="23" /></svg>
        </NavCell>
        <NavCell>
          <svg width="44" height="46" viewBox="0 0 44 46" fill="none" stroke="#888" strokeWidth="4"><rect x="2" y="2" width="40" height="42" rx="3" /></svg>
        </NavCell>
        <NavCell>
          <svg width="42" height="46" viewBox="0 0 42 46" fill="none" stroke="#888" strokeWidth="4"><path d="M1 2h40M1 14h40M21 22v22M7 31l14 13 14-13" /></svg>
        </NavCell>
        <Watermark><WatermarkLead>f)</WatermarkLead>@还002</Watermark>
      </NavBar>
    </Page>
  );
}
